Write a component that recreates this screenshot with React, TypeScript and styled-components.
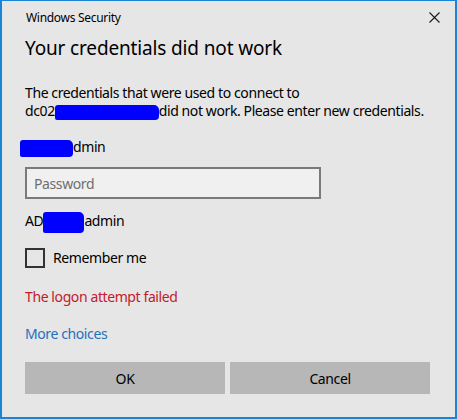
import React from "react";
import styled, { createGlobalStyle } from "styled-components";

const GlobalStyle = createGlobalStyle`
  html, body {
    margin: 0;
    padding: 0;
    background: #e6e6e6;
  }
  * {
    box-sizing: border-box;
  }
`;

export default function App() {
  return (
    <>
      <GlobalStyle />
      <Window>
        <TitleBar>
          <TitleText>Windows Security</TitleText>
          <CloseButton aria-label="Close">
            <svg width="11" height="11" viewBox="0 0 11 11">
              <path d="M0.5 0.5 L10.5 10.5 M10.5 0.5 L0.5 10.5" stroke="#1a1a1a" strokeWidth="1.1" fill="none" />
            </svg>
          </CloseButton>
        </TitleBar>

        <Heading>Your credentials did not work</Heading>

        <Message>
          The credentials that were used to connect to
          <br />
          dc02<Redact width={104} height={15} />did not work. Please enter new credentials.
        </Message>

        <UserLine>
          <Redact width={53} height={17} offset={-5} />dmin
        </UserLine>

        <PasswordInput placeholder="Password" type="password" />

        <UserLine second>
          AD<Redact width={41} height={21} />admin
        </UserLine>

        <CheckRow>
          <Box />
          <CheckLabel>Remember me</CheckLabel>
        </CheckRow>

        <ErrorText>The logon attempt failed</ErrorText>

        <MoreLink>More choices</MoreLink>

        <ButtonRow>
          <Button>OK</Button>
          <Button>Cancel</Button>
        </ButtonRow>
      </Window>
    </>
  );
}

const Window = styled.div`
  width: 457px;
  min-height: 419px;
  display: flex;
  flex-direction: column;
  align-items: flex-start;
  padding: 0 25px 0 23px;
  border-style: solid;
  border-color: #1a84d6;
  border-width: 1px 2px 2px 2px;
  background: #e6e6e6;
  font-family: "Segoe UI", "Noto Sans", sans-serif;
  font-size: 14px;
  letter-spacing: -0.4px;
  line-height: 18px;
  color: #000;

  & > * {
    flex-shrink: 0;
  }
`;

const TitleBar = styled.div`
  display: flex;
  align-items: center;
  justify-content: space-between;
  align-self: stretch;
  height: 33px;
  margin-right: -14px;
`;

const TitleText = styled.span`
  font-size: 12px;
  letter-spacing: -0.3px;
  margin-left: 1px;
`;

const CloseButton = styled.div`
  display: flex;
  align-items: center;
  justify-content: center;
  width: 20px;
  height: 20px;
`;

const Heading = styled.h1`
  margin: 0;
  font-size: 19px;
  font-weight: 400;
  letter-spacing: -0.15px;
  line-height: 28px;
`;

const Message = styled.p`
  margin: 22px 0 0;
`;

const Redact = styled.span<{ width: number; height: number; offset?: number }>`
  display: inline-block;
  vertical-align: middle;
  width: ${(p) => p.width}px;
  height: ${(p) => p.height}px;
  margin: -4px 0 -4px ${(p) => p.offset ?? 0}px;
  background: #0000ff;
  border-radius: 3px 5px 4px 2px;
`;

const UserLine = styled.div<{ second?: boolean }>`
  margin-top: ${(p) => (p.second ? 13 : 18)}px;
`;

const PasswordInput = styled.input`
  margin-top: 11px;
  width: 296px;
  height: 32px;
  padding: 0 7px;
  border: 2px solid #7a7a7a;
  background: #f0f0f0;
  font-family: inherit;
  font-size: 14px;
  letter-spacing: -0.4px;
  outline: none;
  &::placeholder {
    color: #6e6e6e;
  }
`;

const CheckRow = styled.div`
  display: flex;
  align-items: center;
  gap: 8px;
  margin-top: 18px;
`;

const Box = styled.span`
  width: 20px;
  height: 20px;
  border: 2px solid #333;
`;

const CheckLabel = styled.span``;

const ErrorText = styled.div`
  margin-top: 20px;
  color: #c4192b;
`;

const MoreLink = styled.a`
  margin-top: 19px;
  color: #2470bd;
  cursor: pointer;
`;

const ButtonRow = styled.div`
  display: grid;
  grid-template-columns: 1fr 1fr;
  gap: 5px;
  align-self: stretch;
  margin-top: 19px;
`;

const Button = styled.button`
  height: 32px;
  border: none;
  background: #b7b7b7;
  font-family: inherit;
  font-size: 14px;
  letter-spacing: -0.4px;
  color: #000;
`;
